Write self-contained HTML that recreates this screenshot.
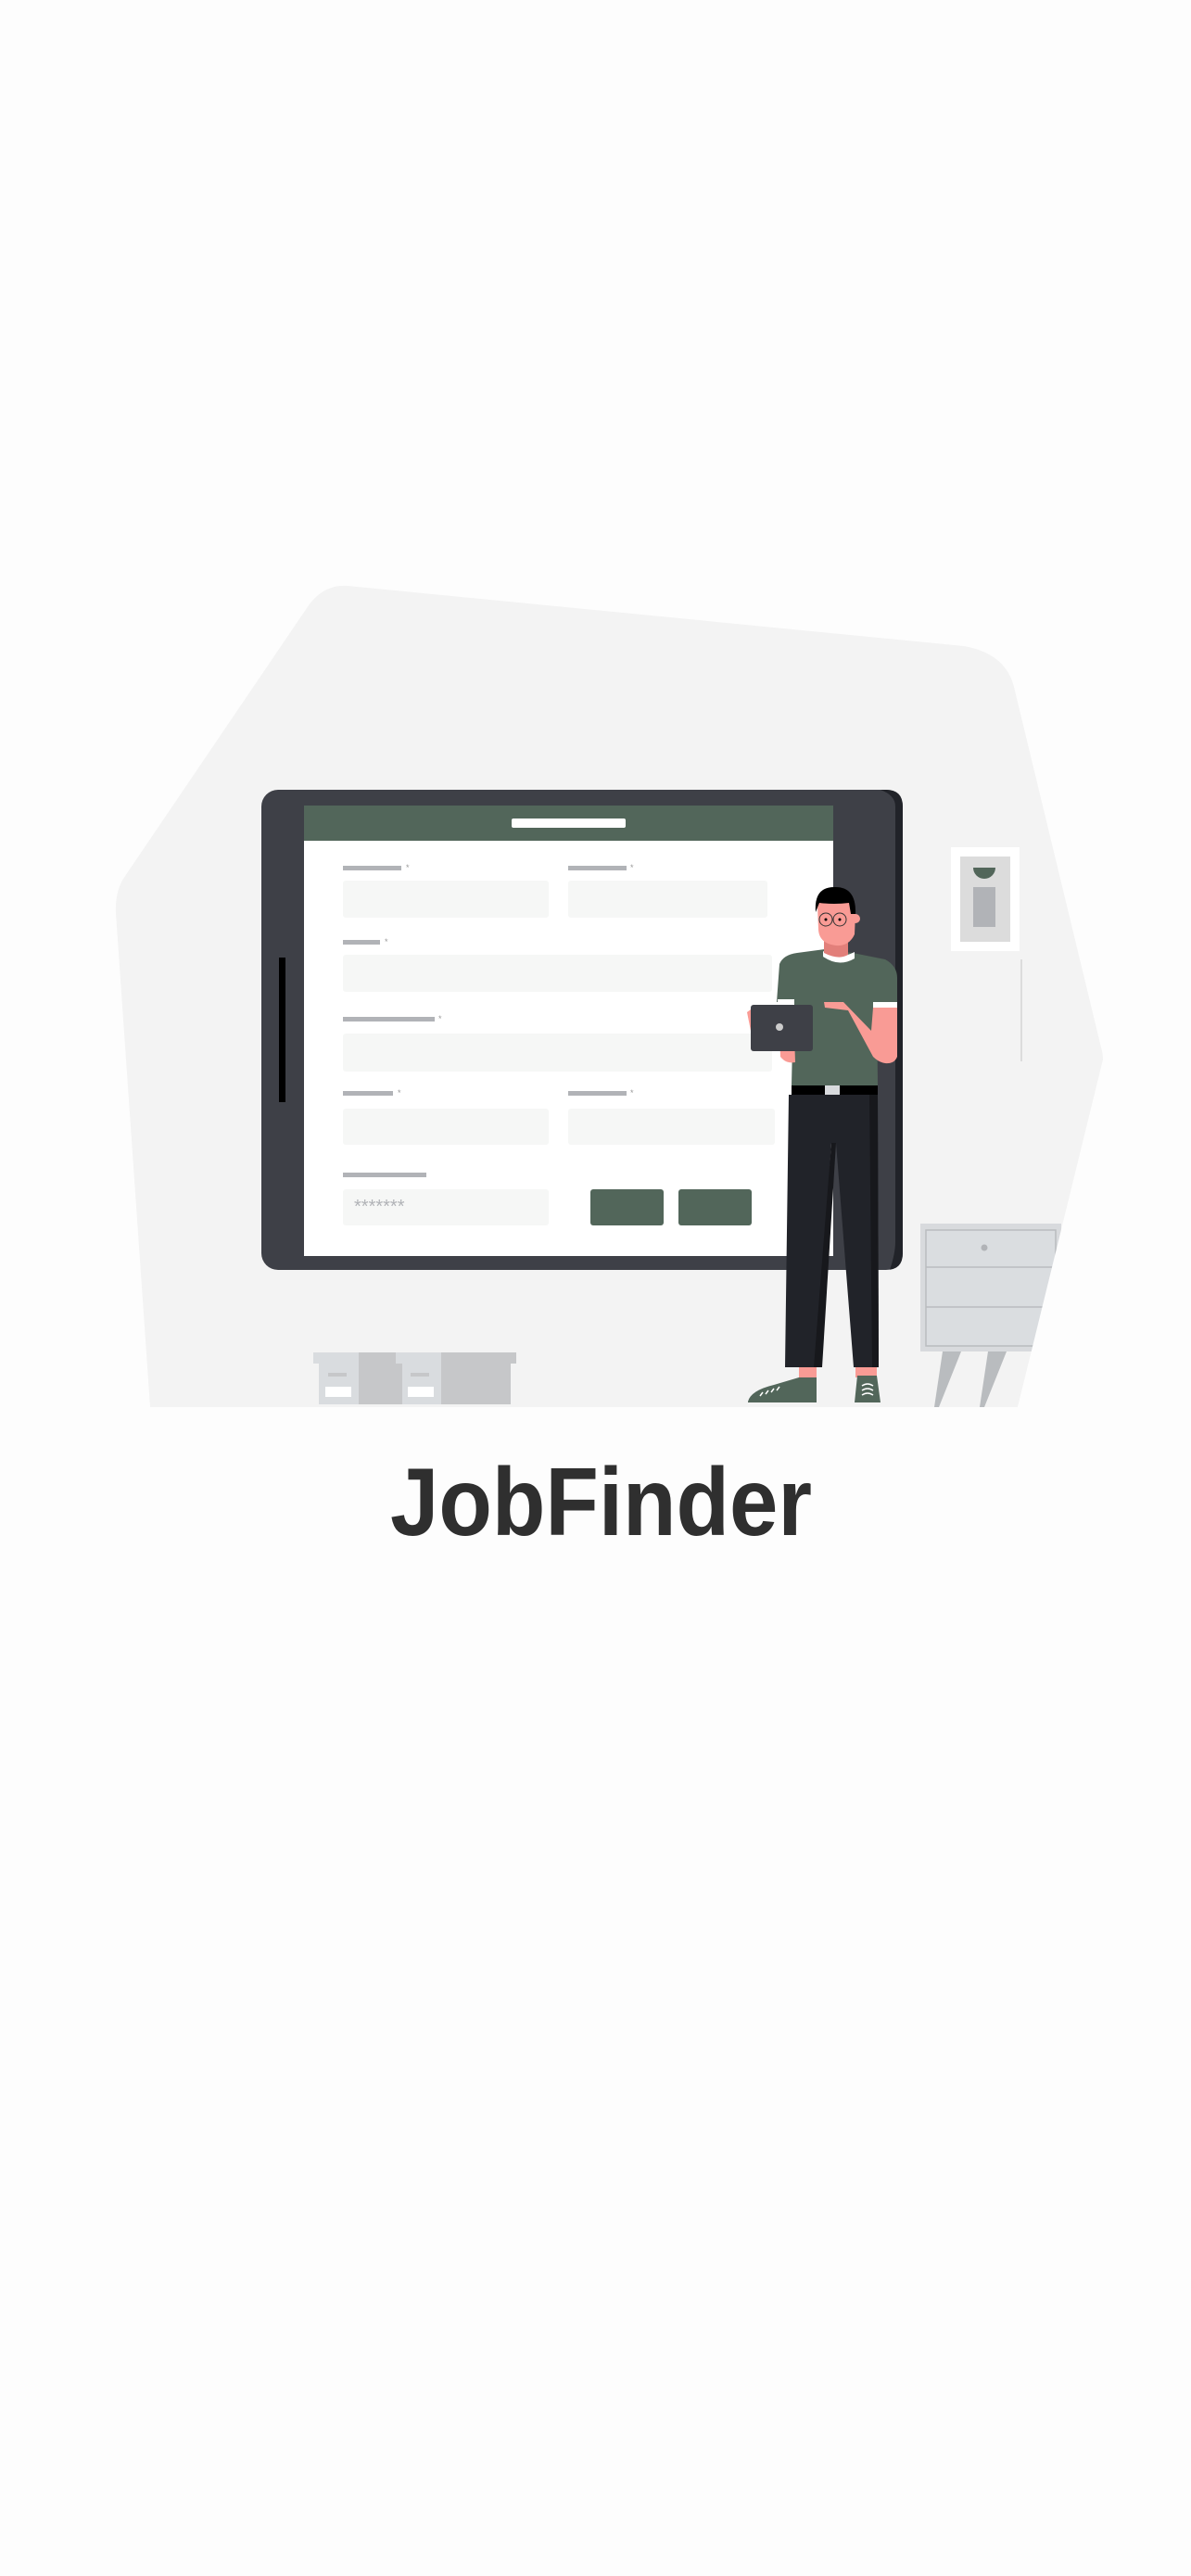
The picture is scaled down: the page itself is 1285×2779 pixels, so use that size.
<!DOCTYPE html>
<html><head><meta charset="utf-8"><style>
html,body{margin:0;padding:0;background:#fdfdfd;}
body{width:1285px;height:2779px;position:relative;overflow:hidden;}
svg{position:absolute;left:0;top:0;}
</style></head><body>
<svg width="1285" height="2779" viewBox="0 0 1285 2779" xmlns="http://www.w3.org/2000/svg">
<!-- blob -->
<path d="M333,653 Q350,630 375,632 L1040,697 Q1085,705 1094,741 L1188,1130 Q1192,1143 1188,1158 L1098,1518 L162,1518 L125,985 Q124,960 135,945 Z" fill="#f3f3f3"/>
<!-- picture frame -->
<rect x="1026" y="914" width="74" height="112" fill="#fff"/>
<rect x="1036" y="924" width="54" height="92" fill="#dcdcdc"/>
<path d="M1050,936 A12,12 0 0 0 1074,936 Z" fill="#52665a"/>
<rect x="1050" y="957" width="24" height="43" fill="#b1b3b7"/>
<rect x="1101" y="1035" width="2" height="110" fill="#dcdcdc"/>
<!-- cabinet -->
<rect x="993" y="1320" width="152" height="138" fill="#d8dadd"/>
<rect x="999" y="1327" width="140" height="125" fill="#dadde0" stroke="#b9bcbf" stroke-width="1.5"/>
<line x1="999" y1="1367" x2="1139" y2="1367" stroke="#b9bcbf" stroke-width="1.5"/>
<line x1="999" y1="1410" x2="1139" y2="1410" stroke="#b9bcbf" stroke-width="1.5"/>
<circle cx="1062" cy="1346" r="3.5" fill="#b1b3b7"/>
<polygon points="1017,1458 1037,1458 1013,1518 1008,1518" fill="#b9bcbf"/>
<polygon points="1066,1458 1086,1458 1062,1518 1057,1518" fill="#b9bcbf"/>
<polygon points="1126,1458 1145,1458 1140,1518 1126,1518" fill="#d8dadd"/>
<polygon points="1190,1143 1098,1518 1200,1518 1200,1143" fill="#fdfdfd"/>
<!-- boxes -->
<rect x="344" y="1471" width="43" height="44" fill="#d9dcdf"/>
<rect x="387" y="1471" width="47" height="44" fill="#c6c7c9"/>
<rect x="434" y="1471" width="42" height="44" fill="#d9dcdf"/>
<rect x="476" y="1471" width="75" height="44" fill="#c6c7c9"/>
<rect x="338" y="1459" width="49" height="12" fill="#d9dcdf"/>
<rect x="387" y="1459" width="40" height="12" fill="#c6c7c9"/>
<rect x="427" y="1459" width="49" height="12" fill="#d9dcdf"/>
<rect x="476" y="1459" width="81" height="12" fill="#c6c7c9"/>
<rect x="354" y="1481" width="20" height="4" fill="#c6c7c9"/>
<rect x="351" y="1496" width="28" height="11" fill="#fff"/>
<rect x="443" y="1481" width="20" height="4" fill="#c6c7c9"/>
<rect x="440" y="1496" width="28" height="11" fill="#fff"/>
<!-- tablet -->
<rect x="282" y="852" width="692" height="518" rx="18" fill="#3e4047"/>
<path d="M950,852 L956,852 Q974,852 974,870 L974,1352 Q974,1370 956,1370 L960,1370 Q966,1352 966,1340 L966,870 Q966,858 950,852Z" fill="#212329"/>
<rect x="328" y="869" width="571" height="486" fill="#fff"/>
<rect x="328" y="869" width="571" height="38" fill="#52665a"/>
<rect x="552" y="883" width="123" height="10" rx="2" fill="#fff"/>
<rect x="301" y="1033" width="7" height="156" fill="#000"/>
<g fill="#b1b3b7">
<rect x="370" y="934" width="63" height="5"/><rect x="613" y="934" width="63" height="5"/>
<rect x="370" y="1014" width="40" height="5"/>
<rect x="370" y="1097" width="99" height="5"/>
<rect x="370" y="1177" width="54" height="5"/><rect x="613" y="1177" width="63" height="5"/>
<rect x="370" y="1265" width="90" height="5"/>
</g>
<g fill="#999" font-family="Liberation Sans,sans-serif" font-size="9">
<text x="438" y="939">*</text><text x="680" y="939">*</text><text x="415" y="1019">*</text><text x="473" y="1102">*</text><text x="429" y="1182">*</text><text x="680" y="1182">*</text>
</g>
<g fill="#f6f7f6">
<rect x="370" y="950" width="222" height="40" rx="3"/><rect x="613" y="950" width="215" height="40" rx="3"/>
<rect x="370" y="1030" width="463" height="40" rx="3"/>
<rect x="370" y="1115" width="463" height="41" rx="3"/>
<rect x="370" y="1196" width="222" height="39" rx="3"/><rect x="613" y="1196" width="223" height="39" rx="3"/>
<rect x="370" y="1283" width="222" height="39" rx="3"/>
</g>
<text x="382" y="1308" font-family="Liberation Sans,sans-serif" font-size="20" fill="#b1b3b7">*******</text>
<rect x="637" y="1283" width="79" height="39" rx="3" fill="#52665a"/>
<rect x="732" y="1283" width="79" height="39" rx="3" fill="#52665a"/>
<!-- person -->
<path d="M851,1181 L947,1181 L948,1475 L921,1475 L902,1233 L897,1233 L881,1475 L847,1475 Z" fill="#212329"/>
<path d="M897,1233 L902,1233 L887,1475 L878,1475Z" fill="#17181c"/>
<path d="M938,1181 L947,1181 L948,1475 L941,1475Z" fill="#17181c"/>
<path d="M862,1475 L881,1475 L881,1490 L862,1490Z" fill="#f99b95"/>
<path d="M923,1475 L946,1475 L946,1486 L923,1486Z" fill="#f99b95"/>
<path d="M807,1512 Q810,1500 835,1494 L862,1486 L881,1486 L881,1513 L807,1513Z" fill="#52665a"/>
<path d="M925,1484 L946,1484 L950,1513 L922,1513Z" fill="#52665a"/>
<g stroke="#fff" stroke-width="1.5"><line x1="820" y1="1506" x2="823" y2="1502"/><line x1="826" y1="1504" x2="829" y2="1500"/><line x1="832" y1="1502" x2="835" y2="1498"/><line x1="838" y1="1500" x2="841" y2="1496"/><path d="M930,1495 Q936,1491 942,1495 M930,1500 Q936,1496 942,1500 M930,1505 Q936,1501 942,1505" fill="none"/></g>
<path d="M841,1040 Q845,1030 860,1028 L890,1024 L920,1028 L955,1035 Q968,1042 968,1055 L968,1081 L946,1081 L947,1171 L854,1171 L856,1081 L838,1081Z" fill="#52665a"/>
<path d="M888,1026 Q905,1036 922,1027 L922,1034 Q905,1044 888,1032Z" fill="#fff"/>
<rect x="942" y="1081" width="26" height="6" fill="#fff"/>
<rect x="839" y="1078" width="18" height="6" fill="#fff"/>
<path d="M942,1087 L968,1087 L968,1140 Q965,1148 955,1147 Q948,1146 942,1140 L915,1090 L890,1087 L889,1081 L910,1081 L940,1112Z" fill="#f99b95"/>
<path d="M840,1084 L856,1084 L858,1146 Q848,1148 842,1140Z" fill="#f99b95"/>
<path d="M806,1092 L814,1086 L818,1114 L810,1112Z" fill="#f99b95"/>
<rect x="810" y="1084" width="67" height="50" rx="3" fill="#3e4047"/>
<circle cx="841" cy="1108" r="4" fill="#ccc"/>
<rect x="854" y="1171" width="93" height="10" fill="#000"/>
<rect x="890" y="1171" width="16" height="10" fill="#d8dadd"/>
<path d="M889,1008 L915,1008 L915,1030 Q905,1036 889,1028Z" fill="#e27f7a"/>
<path d="M882,978 Q882,962 900,962 Q923,962 923,985 L922,1008 Q916,1021 902,1020 Q884,1018 883,1003Z" fill="#f99b95"/>
<circle cx="923" cy="991" r="5" fill="#f99b95"/>
<path d="M880,984 Q878,957 900,957 Q924,956 923,986 L918,986 L916,974 Q900,976 884,974Z" fill="#000"/>
<circle cx="891" cy="992" r="7" fill="none" stroke="#333" stroke-width="1"/>
<circle cx="906" cy="992" r="7" fill="none" stroke="#333" stroke-width="1"/>
<circle cx="891" cy="992" r="1.5" fill="#000"/><circle cx="906" cy="992" r="1.5" fill="#000"/>
<!-- title -->
<text x="421" y="1656" font-family="Liberation Sans,sans-serif" font-weight="bold" font-size="104" fill="#2f2f2f" textLength="455" lengthAdjust="spacingAndGlyphs">JobFinder</text>
</svg>
</body></html>
